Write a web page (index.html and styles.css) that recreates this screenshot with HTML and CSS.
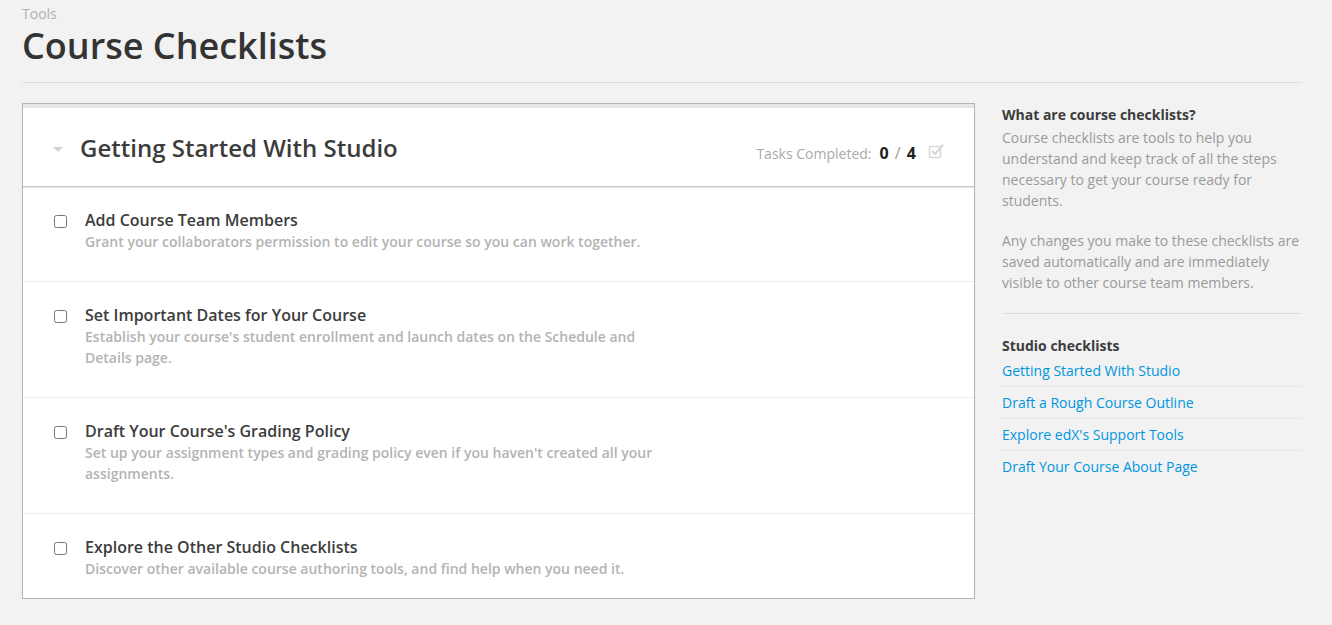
FILE: index.html
```html
<!DOCTYPE html>
<html lang="en">
<head>
<meta charset="utf-8">
<title>Course Checklists</title>
<link rel="stylesheet" href="styles.css">
</head>
<body>
<div class="page">
  <header class="page-header">
    <div class="subtitle">Tools</div>
    <h1 class="page-title">Course Checklists</h1>
  </header>
  <div class="layout">
    <main class="main">
      <section class="card">
        <div class="card-header">
          <div class="card-title-wrap">
            <span class="caret"></span>
            <h2 class="card-title">Getting Started With Studio</h2>
          </div>
          <div class="progress">
            <span class="progress-label">Tasks Completed:</span>
            <span class="progress-count">0 <span class="slash">/</span> 4</span>
            <svg class="progress-icon" width="16" height="16" viewBox="0 0 16 16">
              <rect x="1.5" y="3.5" width="11" height="11" rx="1.5" fill="none" stroke="#d9d9d9" stroke-width="1.6"/>
              <path d="M4.5 8.5 L7 11 L14.5 2.5" fill="none" stroke="#d9d9d9" stroke-width="2.2" stroke-linecap="round" stroke-linejoin="round"/>
            </svg>
          </div>
        </div>
        <ul class="tasks">
          <li class="task">
            <input type="checkbox" class="task-check">
            <div class="task-body">
              <h3 class="task-title">Add Course Team Members</h3>
              <p class="task-desc">Grant your collaborators permission to edit your course so you can work together.</p>
            </div>
          </li>
          <li class="task">
            <input type="checkbox" class="task-check">
            <div class="task-body">
              <h3 class="task-title">Set Important Dates for Your Course</h3>
              <p class="task-desc">Establish your course's student enrollment and launch dates on the Schedule and Details page.</p>
            </div>
          </li>
          <li class="task">
            <input type="checkbox" class="task-check">
            <div class="task-body">
              <h3 class="task-title">Draft Your Course's Grading Policy</h3>
              <p class="task-desc">Set up your assignment types and grading policy even if you haven't created all your assignments.</p>
            </div>
          </li>
          <li class="task task-last">
            <input type="checkbox" class="task-check">
            <div class="task-body">
              <h3 class="task-title">Explore the Other Studio Checklists</h3>
              <p class="task-desc">Discover other available course authoring tools, and find help when you need it.</p>
            </div>
          </li>
        </ul>
      </section>
    </main>
    <aside class="sidebar">
      <div class="side-block">
        <h3 class="side-title">What are course checklists?</h3>
        <p class="side-text">Course checklists are tools to help you understand and keep track of all the steps necessary to get your course ready for students.</p>
        <p class="side-text">Any changes you make to these checklists are saved automatically and are immediately visible to other course team members.</p>
      </div>
      <div class="side-block side-links">
        <h3 class="side-title">Studio checklists</h3>
        <ul class="link-list">
          <li><a href="#">Getting Started With Studio</a></li>
          <li><a href="#">Draft a Rough Course Outline</a></li>
          <li><a href="#">Explore edX's Support Tools</a></li>
          <li><a href="#">Draft Your Course About Page</a></li>
        </ul>
      </div>
    </aside>
  </div>
</div>
</body>
</html>
```
FILE: styles.css
```css
* { box-sizing: border-box; }
html, body {
  margin: 0;
  padding: 0;
  background: #f2f2f2;
  font-family: "Open Sans", "Liberation Sans", sans-serif;
  color: #3c3c3c;
}
.page {
  width: 1280px;
  margin: 0 0 0 22px;
}
.page-header {
  padding-top: 5px;
  padding-bottom: 13px;
  border-bottom: 1px solid #dedede;
}
.subtitle {
  font-size: 14px;
  line-height: 18px;
  color: #b0b0b0;
}
.page-title {
  margin: 0;
  font-size: 36px;
  font-weight: 600;
  line-height: 46px;
  color: #333;
}
.layout {
  display: flex;
  gap: 27px;
  margin-top: 20px;
}
.main { width: 953px; }
.sidebar { width: 300px; }

.card {
  background: #fff;
  border: 1px solid #b5b5b5;
  box-shadow: 0 1px 1px rgba(0,0,0,0.08);
}
.card-header {
  display: flex;
  align-items: center;
  justify-content: space-between;
  height: 83px;
  border-top: 4px solid #e6e6e6;
  border-bottom: 1px solid #c8c8c8;
  box-shadow: 0 1px 0 #e8e8e8;
  padding: 0 30px 0 30px;
}
.card-title-wrap {
  display: flex;
  align-items: center;
  padding-top: 2px;
}
.caret {
  width: 0;
  height: 0;
  border-left: 5px solid transparent;
  border-right: 5px solid transparent;
  border-top: 5px solid #d3d3d3;
  margin-right: 17px;
  margin-top: 3px;
}
.card-title {
  margin: 0;
  font-size: 24px;
  font-weight: 600;
  line-height: 32px;
  color: #3c3c3c;
}
.progress {
  display: flex;
  align-items: center;
  padding-top: 12px;
}
.progress-label {
  font-size: 14px;
  color: #a9a9a9;
  margin-right: 8px;
}
.progress-count {
  font-size: 16px;
  font-weight: 700;
  color: #222;
}
.progress-count .slash {
  font-weight: 400;
  color: #999;
  margin: 0 2px;
}
.progress-icon {
  margin-left: 12px;
  margin-top: -4px;
}

.tasks {
  list-style: none;
  margin: 0;
  padding: 0;
}
.task {
  display: flex;
  align-items: flex-start;
  padding: 22px 20px 29px 30px;
  border-bottom: 1px solid #ececec;
}
.task-last {
  border-bottom: 0;
  padding-bottom: 19px;
}
.task-check {
  margin: 6px 18px 0 1px;
  width: 13px;
  height: 13px;
  flex: none;
}
.task-body { max-width: 575px; }
.task-title {
  margin: 0;
  font-size: 16px;
  font-weight: 600;
  line-height: 22px;
  color: #3c3c3c;
}
.task-desc {
  margin: 0;
  font-size: 14px;
  font-weight: 600;
  line-height: 21px;
  color: #b3b3b3;
}

.side-block {
  padding-bottom: 20px;
  border-bottom: 1px solid #dedede;
}
.side-title {
  margin: 0;
  font-size: 14px;
  font-weight: 700;
  line-height: 21px;
  color: #3c3c3c;
  padding-top: 1px;
}
.side-text {
  margin: 2px 0 19px;
  font-size: 14px;
  line-height: 21px;
  color: #9a9a9a;
}
.side-text:last-child { margin-bottom: 0; }
.side-links {
  border-bottom: 0;
  padding-top: 20px;
}
.link-list {
  list-style: none;
  margin: 4px 0 0;
  padding: 0;
}
.link-list li {
  line-height: 21px;
  padding: 5px 0 5px;
  border-bottom: 1px dotted #dcdcdc;
}
.link-list li:first-child { padding-top: 0; }
.link-list li:last-child { border-bottom: 0; }
.link-list a {
  font-size: 14px;
  color: #0096e0;
  text-decoration: none;
}
```
